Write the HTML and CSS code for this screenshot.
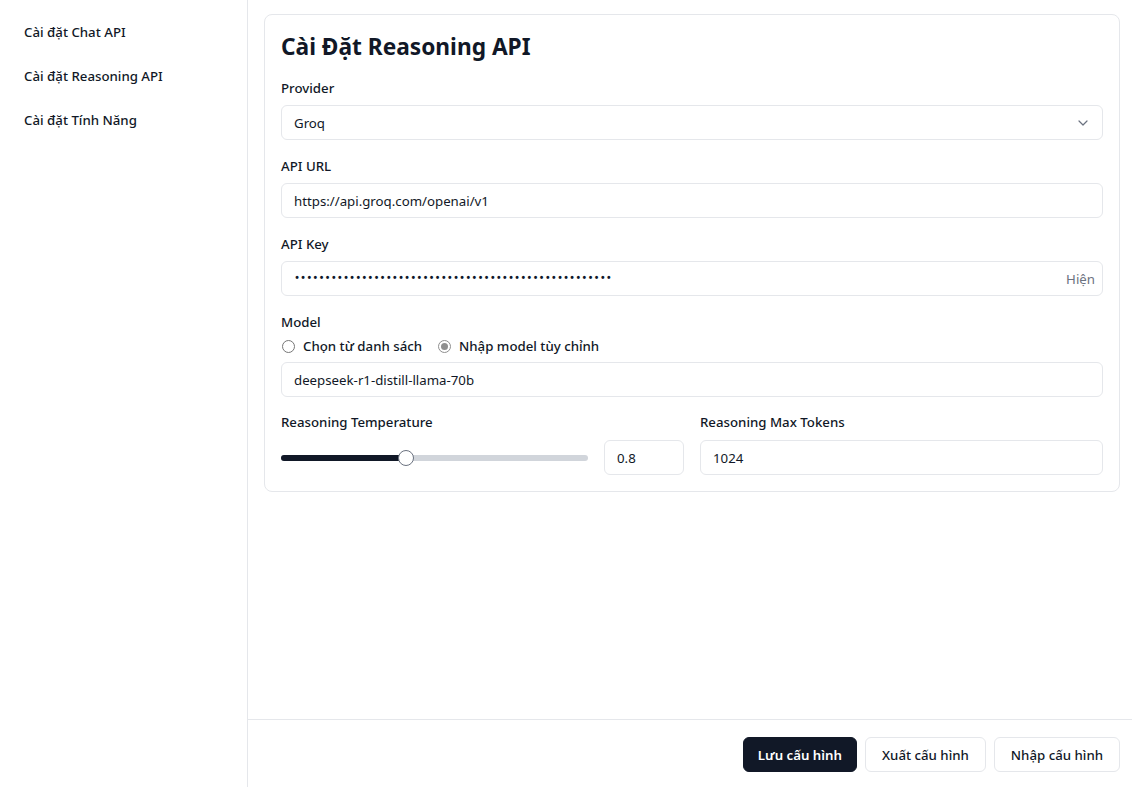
FILE: index.html
```html
<!DOCTYPE html>
<html lang="vi">
<head>
<meta charset="utf-8">
<title>Cài Đặt</title>
<link rel="stylesheet" href="styles.css">
</head>
<body>
<div class="app">
  <aside class="sidebar">
    <div class="nav-item">Cài đặt Chat API</div>
    <div class="nav-item">Cài đặt Reasoning API</div>
    <div class="nav-item">Cài đặt Tính Năng</div>
  </aside>
  <div class="main">
    <div class="content">
      <section class="card">
        <h1 class="title">Cài Đặt Reasoning API</h1>
        <div class="field">
          <label class="label">Provider</label>
          <div class="input select">
            <span>Groq</span>
            <svg class="chev" width="16" height="16" viewBox="0 0 24 24" fill="none" stroke="#6b7280" stroke-width="1.8" stroke-linecap="round" stroke-linejoin="round"><path d="M6 9l6 6 6-6"/></svg>
          </div>
        </div>
        <div class="field">
          <label class="label">API URL</label>
          <div class="input">https://api.groq.com/openai/v1</div>
        </div>
        <div class="field">
          <label class="label">API Key</label>
          <div class="input keyrow">
            <span class="dots">••••••••••••••••••••••••••••••••••••••••••••••••••••</span>
            <span class="show">Hiện</span>
          </div>
        </div>
        <div class="field model">
          <label class="label">Model</label>
          <div class="radios">
            <span class="radio"><span class="rc"></span>Chọn từ danh sách</span>
            <span class="radio"><span class="rc on"></span>Nhập model tùy chỉnh</span>
          </div>
          <div class="input">deepseek-r1-distill-llama-70b</div>
        </div>
        <div class="row2">
          <div class="col">
            <label class="label wide">Reasoning Temperature</label>
            <div class="temprow">
              <div class="slider">
                <div class="track"><div class="fill" style="width:40.6%"></div></div>
                <div class="thumb" style="left:40.6%"></div>
              </div>
              <div class="input num">0.8</div>
            </div>
          </div>
          <div class="col">
            <label class="label wide">Reasoning Max Tokens</label>
            <div class="input">1024</div>
          </div>
        </div>
      </section>
    </div>
    <footer class="footer">
      <button class="btn primary">Lưu cấu hình</button>
      <button class="btn">Xuất cấu hình</button>
      <button class="btn">Nhập cấu hình</button>
    </footer>
  </div>
</div>
</body>
</html>
```
FILE: styles.css
```css
* { box-sizing: border-box; }
html, body { margin: 0; height: 100%; }
body {
  font-family: "Noto Sans", "Open Sans", sans-serif;
  font-size: 13.25px;
  color: #111827;
  background: #fff;
}
.app { display: flex; height: 787px; }
.sidebar {
  width: 248px;
  flex: none;
  border-right: 1px solid #e5e7eb;
  padding-top: 10px;
}
.nav-item {
  padding: 12px 24px;
  line-height: 20px;
  font-size: 13.25px;
  font-weight: 500;
  color: #111827;
}
.main { flex: 1; display: flex; flex-direction: column; min-width: 0; }
.content { flex: 1; padding: 14px 12px 0 16px; }
.card {
  border: 1px solid #e5e7eb;
  border-radius: 8px;
  padding: 16px 16px 16px 16px;
}
.title {
  margin: 0 0 15px;
  font-size: 22.7px;
  line-height: 32px;
  font-weight: 700;
  color: #111827;
}
.field { margin-bottom: 16px; }
.label {
  display: block;
  font-size: 13.25px;
  line-height: 20px;
  font-weight: 500;
  margin-bottom: 7px;
}
.label.wide { margin-bottom: 8px; }
.input {
  height: 35px;
  border: 1px solid #e5e7eb;
  border-radius: 6px;
  padding: 0 12px;
  display: flex;
  align-items: center;
  font-size: 13.25px;
  color: #111827;
}
.select { justify-content: space-between; padding-right: 11px; }
.keyrow { justify-content: space-between; padding-right: 7px; }
.dots { font-family: "Liberation Mono", monospace; font-size: 10.2px; font-weight: 700; color: #0f172a; }
.show { color: #6b7280; }
.model { margin-bottom: 15px; }
.model .label { margin-bottom: 4px; }
.radios { display: flex; gap: 16px; margin: 0 0 6px; line-height: 20px; }
.radio { display: flex; align-items: center; gap: 8px; font-weight: 500; }
.radio:first-child .rc { margin-left: 1px; }
.rc {
  width: 13px; height: 13px;
  border: 1px solid #767676;
  border-radius: 50%;
  display: inline-flex; align-items: center; justify-content: center;
}
.rc.on { border-color: #8f8f8f; }
.rc.on::after {
  content: ""; width: 7px; height: 7px; border-radius: 50%; background: #8f8f8f;
}
.row2 { display: grid; grid-template-columns: 1fr 1fr; gap: 16px; }
.temprow { display: flex; align-items: center; gap: 16px; }
.slider { flex: 1; position: relative; height: 20px; display: flex; align-items: center; }
.track { width: 100%; height: 6px; border-radius: 3px; background: #d1d5db; overflow: hidden; }
.fill { height: 100%; background: #111827; }
.thumb {
  position: absolute; top: 2px;
  width: 16px; height: 16px; margin-left: -8px;
  border-radius: 50%; background: #fff; border: 1px solid #6b7280;
}
.num { width: 80px; flex: none; }
.footer {
  border-top: 1px solid #e5e7eb;
  padding: 17px 12px 15px;
  display: flex;
  justify-content: flex-end;
  gap: 8px;
}
.btn {
  height: 35px;
  padding: 0 16px;
  border: 1px solid #e5e7eb;
  border-radius: 6px;
  background: #fff;
  color: #111827;
  font-family: inherit;
  font-size: 13.25px;
  font-weight: 500;
}
.btn.primary { background: #111827; color: #fff; border-color: #111827; font-weight: 600; padding: 0 14px; }
```
